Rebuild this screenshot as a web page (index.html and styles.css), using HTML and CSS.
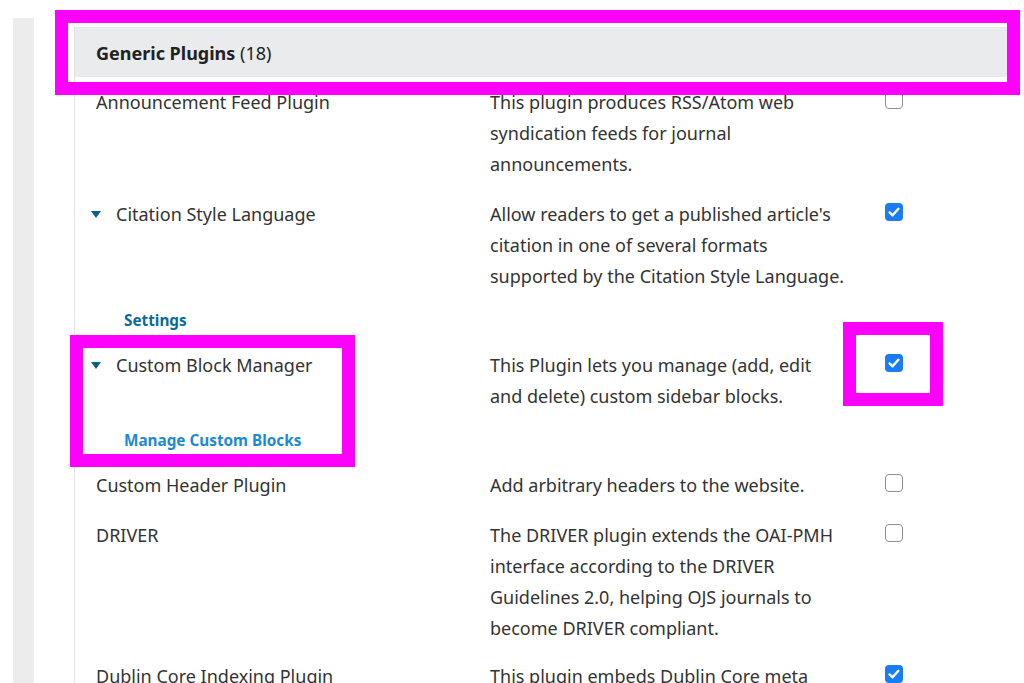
FILE: index.html
```html
<!DOCTYPE html>
<html lang="en">
<head>
<meta charset="utf-8">
<title>Generic Plugins</title>
<link rel="stylesheet" href="styles.css">
</head>
<body>
<div class="page">
  <div class="sidebar"></div>
  <main class="main">
    <section class="panel">
      <div class="panel-header"><strong>Generic Plugins</strong> (18)</div>

      <div class="plugin">
        <div class="row">
          <div class="name">Announcement Feed Plugin</div>
          <div class="desc">This plugin produces RSS/Atom web syndication feeds for journal announcements.</div>
          <div class="enable"><span class="checkbox"></span></div>
        </div>
      </div>

      <div class="plugin">
        <div class="row">
          <div class="name"><span class="toggle"></span>Citation Style Language</div>
          <div class="desc">Allow readers to get a published article's citation in one of several formats supported by the Citation Style Language.</div>
          <div class="enable"><span class="checkbox checked"><svg viewBox="0 0 18 18" width="18" height="18"><path d="M4.6 9.4 L7.6 12.3 L13.4 5.8" fill="none" stroke="#fff" stroke-width="2.4" stroke-linecap="round" stroke-linejoin="round"/></svg></span></div>
        </div>
        <div class="actions"><a class="action" href="#">Settings</a></div>
      </div>

      <div class="plugin">
        <div class="row">
          <div class="name"><span class="toggle"></span>Custom Block Manager</div>
          <div class="desc">This Plugin lets you manage (add, edit and delete) custom sidebar blocks.</div>
          <div class="enable"><span class="checkbox checked"><svg viewBox="0 0 18 18" width="18" height="18"><path d="M4.6 9.4 L7.6 12.3 L13.4 5.8" fill="none" stroke="#fff" stroke-width="2.4" stroke-linecap="round" stroke-linejoin="round"/></svg></span></div>
        </div>
        <div class="actions"><a class="action hover" href="#">Manage Custom Blocks</a></div>
      </div>

      <div class="plugin">
        <div class="row">
          <div class="name">Custom Header Plugin</div>
          <div class="desc">Add arbitrary headers to the website.</div>
          <div class="enable"><span class="checkbox"></span></div>
        </div>
      </div>

      <div class="plugin">
        <div class="row row-tight">
          <div class="name">DRIVER</div>
          <div class="desc">The DRIVER plugin extends the OAI-PMH interface according to the DRIVER Guidelines 2.0, helping OJS journals to become DRIVER compliant.</div>
          <div class="enable"><span class="checkbox"></span></div>
        </div>
      </div>

      <div class="plugin">
        <div class="row">
          <div class="name">Dublin Core Indexing Plugin</div>
          <div class="desc">This plugin embeds Dublin Core meta tags in article views for indexing purposes.</div>
          <div class="enable"><span class="checkbox checked"><svg viewBox="0 0 18 18" width="18" height="18"><path d="M4.6 9.4 L7.6 12.3 L13.4 5.8" fill="none" stroke="#fff" stroke-width="2.4" stroke-linecap="round" stroke-linejoin="round"/></svg></span></div>
        </div>
      </div>
    </section>
  </main>
</div>

<div class="highlight hl-header"></div>
<div class="highlight hl-name"></div>
<div class="highlight hl-check"></div>
</body>
</html>
```

FILE: styles.css
```css
html, body {
  margin: 0;
  padding: 0;
  background: #fff;
  height: 683px;
  overflow: hidden;
}

body {
  font-family: "Noto Sans", "Open Sans", sans-serif;
  font-size: 18px;
  color: #333;
  position: relative;
}

.page {
  display: flex;
  height: 683px;
}

.sidebar {
  width: 21px;
  margin-left: 13px;
  margin-top: 18px;
  background: #ececed;
  flex: none;
}

.main {
  flex: 1;
  margin-left: 40px;
  padding-top: 27px;
}

.panel {
  border-left: 1px solid #e4e4e6;
  min-height: 700px;
  margin-right: 16px;
}

.panel-header {
  height: 50px;
  background: #eaebed;
  padding-left: 21px;
  color: #222;
  box-sizing: border-box;
  padding-top: 2px;
  line-height: 48px;
}

.panel-header strong {
  font-weight: 700;
}

.row {
  display: grid;
  grid-template-columns: 415px 355px auto;
  padding: 10px 0 9px;
  line-height: 31px;
}

.row-tight {
  padding-bottom: 7px;
}

.name {
  padding-left: 21px;
  display: flex;
  align-items: flex-start;
}

.toggle {
  width: 25px;
  margin-left: -5px;
  height: 31px;
  flex: none;
  position: relative;
}

.toggle::before {
  content: "";
  position: absolute;
  left: 0;
  top: 12px;
  border-left: 5px solid transparent;
  border-right: 5px solid transparent;
  border-top: 7px solid #0b5f8c;
}

.enable {
  padding-left: 40px;
}

.checkbox {
  display: block;
  width: 18px;
  height: 18px;
  margin-top: 4px;
  box-sizing: border-box;
  border: 1.5px solid #8d8d8d;
  border-radius: 4px;
  background: #fff;
}

.checkbox.checked {
  border: none;
  background: #1a7cf4;
}

.checkbox svg {
  display: block;
}

.actions {
  height: 39px;
  line-height: 37px;
  padding-left: 49px;
}

.action {
  font-size: 15.3px;
  font-weight: 700;
  color: #0a6a9c;
  text-decoration: none;
}

.action.hover {
  color: #1c8ad3;
}

.highlight {
  position: absolute;
  border: 13px solid #ff00ff;
  box-sizing: border-box;
  pointer-events: none;
}

.hl-header {
  left: 55px;
  top: 10px;
  width: 965px;
  height: 85px;
}

.hl-name {
  left: 70px;
  top: 335px;
  width: 285px;
  height: 132px;
}

.hl-check {
  left: 843px;
  top: 322px;
  width: 100px;
  height: 84px;
}
```
